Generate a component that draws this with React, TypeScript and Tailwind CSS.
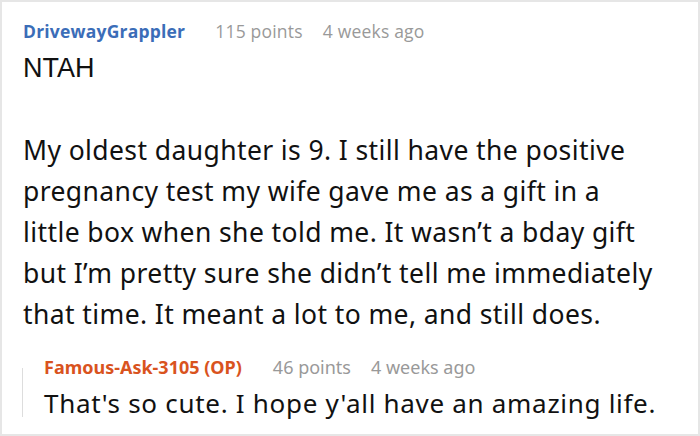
const body = [
  "My oldest daughter is 9. I still have the positive",
  "pregnancy test my wife gave me as a gift in a",
  "little box when she told me. It wasn\u2019t a bday gift",
  "but I\u2019m pretty sure she didn\u2019t tell me immediately",
  "that time. It meant a lot to me, and still does.",
];

export default function App() {
  return (
    <div className="flex h-[436px] w-[700px] flex-col overflow-hidden border-2 border-[#e6e6e6] bg-white px-[21px] pt-[17px] text-[#111]">
      <div className="flex items-baseline font-['Open_Sans',sans-serif] text-[17.5px] leading-6 tracking-[0.2px]">
        <span className="font-bold text-[#3b6db8]">DrivewayGrappler</span>
        <span className="ml-[30px] text-[#999]">115 points</span>
        <span className="ml-5 text-[#999]">4 weeks ago</span>
      </div>
      <p className="mt-[9px] font-['Liberation_Sans',Arial,sans-serif] text-[27px] leading-8">
        NTAH
      </p>
      <div className="mt-[46px] font-['Noto_Sans',sans-serif] text-[26.5px] leading-[41px] tracking-[0.4px]">
        {body.map((line) => (
          <div key={line} className="whitespace-nowrap">
            {line}
          </div>
        ))}
      </div>
      <div className="-ml-px mt-[20px] flex">
        <div className="mt-[13px] h-[49px] w-px bg-[#ddd]" />
        <div className="pl-[21px] font-['Noto_Sans',sans-serif]">
          <div className="flex items-baseline text-[18px] leading-6">
            <span className="font-bold text-[#d9531e]">Famous-Ask-3105 (OP)</span>
            <span className="ml-[31px] text-[#999]">46 points</span>
            <span className="ml-5 text-[#999]">4 weeks ago</span>
          </div>
          <p className="mt-2 whitespace-nowrap text-[26px] leading-8 tracking-[0.7px]">
            That&apos;s so cute. I hope y&apos;all have an amazing life.
          </p>
        </div>
      </div>
    </div>
  );
}
